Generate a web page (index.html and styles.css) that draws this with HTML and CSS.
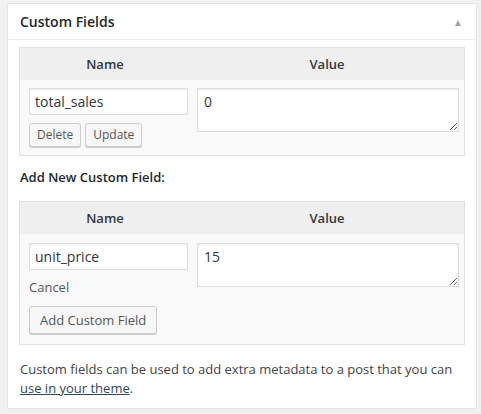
FILE: index.html
```html
<!DOCTYPE html>
<html>
<head>
<meta charset="utf-8">
<link rel="stylesheet" href="styles.css">
</head>
<body>
<div class="postbox">
  <div class="box-header">
    <h2 class="box-title">Custom Fields</h2>
    <span class="toggle"></span>
  </div>
  <div class="inside">
    <div class="meta-table">
      <div class="meta-head">
        <div>Name</div>
        <div>Value</div>
      </div>
      <div class="meta-row">
        <div class="name-cell">
          <input class="text-input" type="text" value="total_sales">
          <div class="btn-row">
            <button class="btn btn-small">Delete</button>
            <button class="btn btn-small">Update</button>
          </div>
        </div>
        <div class="value-cell">
          <textarea class="text-area">0</textarea>
        </div>
      </div>
    </div>

    <p class="add-title">Add New Custom Field:</p>

    <div class="meta-table">
      <div class="meta-head">
        <div>Name</div>
        <div>Value</div>
      </div>
      <div class="meta-row meta-row-new">
        <div class="name-cell">
          <input class="text-input" type="text" value="unit_price">
          <div class="cancel">Cancel</div>
        </div>
        <div class="value-cell">
          <textarea class="text-area">15</textarea>
        </div>
        <div class="submit-cell">
          <button class="btn">Add Custom Field</button>
        </div>
      </div>
    </div>

    <p class="note">Custom fields can be used to add extra metadata to a post that you can <a href="#">use in your theme</a>.</p>
  </div>
</div>
</body>
</html>
```

FILE: styles.css
```css
* { box-sizing: border-box; }

html, body {
  margin: 0;
  padding: 0;
  background: #f1f1f1;
}

body {
  font-family: "Open Sans", "Liberation Sans", sans-serif;
  font-size: 13px;
  color: #444;
  padding: 3px 4px 0 7px;
}

.postbox {
  width: 470px;
  background: #fff;
  border: 1px solid #e5e5e5;
  box-shadow: 0 1px 1px rgba(0,0,0,.04);
}

.box-header {
  height: 36px;
  display: flex;
  align-items: center;
  justify-content: space-between;
  padding: 0 15px 0 12px;
  border-bottom: 1px solid #eee;
}

.box-title {
  margin: 0;
  font-size: 14px;
  font-weight: 600;
  color: #23282d;
}

.toggle {
  width: 0;
  height: 0;
  border-left: 3.5px solid transparent;
  border-right: 3.5px solid transparent;
  border-bottom: 6px solid #a0a5aa;
  margin-top: 2px;
}

.inside {
  padding: 7px 11px 10px 11px;
}

.meta-table {
  border: 1px solid #e1e1e1;
  background: #f9f9f9;
}

.meta-head {
  display: grid;
  grid-template-columns: 170px 1fr;
  height: 32px;
  align-items: center;
  background: #efefef;
  font-weight: 600;
  color: #32373c;
  text-align: center;
}

.meta-row {
  display: grid;
  grid-template-columns: 159px 262px;
  column-gap: 9px;
  padding: 8px 4px 8px 9px;
}

.meta-row-new {
  padding-top: 9px;
  padding-bottom: 10px;
}

.name-cell {
  display: flex;
  flex-direction: column;
  align-items: flex-start;
}

.text-input {
  width: 159px;
  height: 27px;
  border: 1px solid #ddd;
  box-shadow: inset 0 1px 2px rgba(0,0,0,.07);
  background: #fff;
  font-family: inherit;
  font-size: 14px;
  color: #32373c;
  padding: 0 5px;
  margin: 0;
  outline: none;
}

.text-area {
  display: block;
  width: 262px;
  height: 44px;
  border: 1px solid #ddd;
  box-shadow: inset 0 1px 2px rgba(0,0,0,.07);
  background: #fff;
  font-family: inherit;
  font-size: 14px;
  color: #32373c;
  padding: 3px 6px;
  margin: 0;
  resize: both;
  outline: none;
}

.btn-row {
  display: flex;
  gap: 4px;
  margin-top: 8px;
}

.btn {
  font-family: inherit;
  font-size: 13px;
  color: #555;
  background: #f7f7f7;
  border: 1px solid #ccc;
  border-radius: 3px;
  box-shadow: 0 1px 0 #ccc;
  height: 28px;
  padding: 0 10px;
  margin: 0;
  line-height: 26px;
  cursor: pointer;
}

.btn-small {
  font-size: 12px;
  height: 24px;
  line-height: 22px;
  padding: 0 7px;
}

.cancel {
  margin-top: 7px;
  line-height: 20px;
  color: #555;
}

.submit-cell {
  grid-column: 1 / 3;
  margin-top: 9px;
}

.add-title {
  margin: 12px 0 14px 1px;
  font-weight: 600;
  color: #23282d;
  line-height: 19px;
}

.note {
  margin: 15px 0 0 1px;
  line-height: 19px;
  color: #444;
}

.note a {
  color: #33475b;
  text-decoration: underline;
}
```
